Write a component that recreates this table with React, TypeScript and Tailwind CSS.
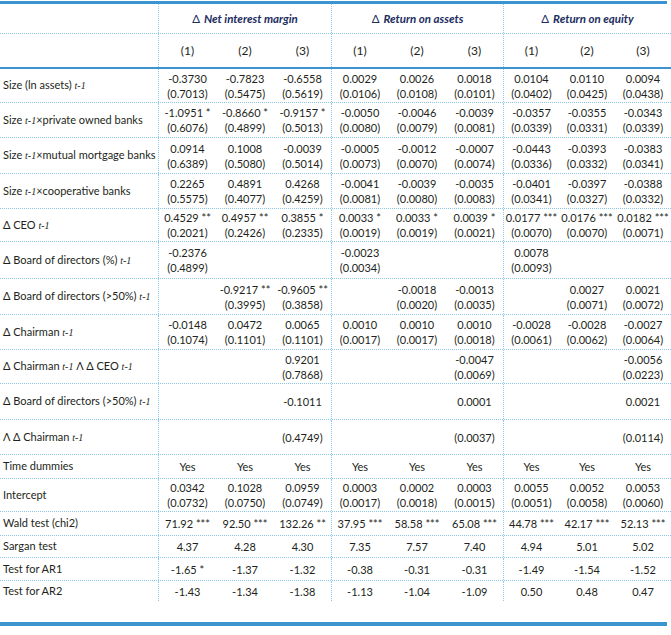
import React from "react";

type Cell = string[] | null;
type Row = { label: React.ReactNode; h: string; cells: Cell[]; last?: boolean };

const T = () => (
  <span className="italic text-[10px]" style={{ fontFamily: '"Liberation Serif", serif' }}>
    t-1
  </span>
);

const v = (s: string): string[] => s.split("|");

const rows: Row[] = [
  {
    label: <>Size (ln assets) <T /></>,
    h: "h-[34px]",
    cells: [v("-0.3730|(0.7013)"), v("-0.7823|(0.5475)"), v("-0.6558|(0.5619)"), v("0.0029|(0.0106)"), v("0.0026|(0.0108)"), v("0.0018|(0.0101)"), v("0.0104|(0.0402)"), v("0.0110|(0.0425)"), v("0.0094|(0.0438)")],
  },
  {
    label: <>Size <T />×private owned banks</>,
    h: "h-[35px]",
    cells: [v("-1.0951 *|(0.6076)"), v("-0.8660 *|(0.4899)"), v("-0.9157 *|(0.5013)"), v("-0.0050|(0.0080)"), v("-0.0046|(0.0079)"), v("-0.0039|(0.0081)"), v("-0.0357|(0.0339)"), v("-0.0355|(0.0331)"), v("-0.0343|(0.0339)")],
  },
  {
    label: <>Size <T />×mutual mortgage banks</>,
    h: "h-[36px]",
    cells: [v("0.0914|(0.6389)"), v("0.1008|(0.5080)"), v("-0.0039|(0.5014)"), v("-0.0005|(0.0073)"), v("-0.0012|(0.0070)"), v("-0.0007|(0.0074)"), v("-0.0443|(0.0336)"), v("-0.0393|(0.0332)"), v("-0.0383|(0.0341)")],
  },
  {
    label: <>Size <T />×cooperative banks</>,
    h: "h-[35px]",
    cells: [v("0.2265|(0.5575)"), v("0.4891|(0.4077)"), v("0.4268|(0.4259)"), v("-0.0041|(0.0081)"), v("-0.0039|(0.0080)"), v("-0.0035|(0.0083)"), v("-0.0401|(0.0341)"), v("-0.0397|(0.0327)"), v("-0.0388|(0.0332)")],
  },
  {
    label: <>Δ CEO <T /></>,
    h: "h-[33px]",
    cells: [v("0.4529 **|(0.2021)"), v("0.4957 **|(0.2426)"), v("0.3855 *|(0.2335)"), v("0.0033 *|(0.0019)"), v("0.0033 *|(0.0019)"), v("0.0039 *|(0.0021)"), v("0.0177 ***|(0.0070)"), v("0.0176 ***|(0.0070)"), v("0.0182 ***|(0.0071)")],
  },
  {
    label: <>Δ Board of directors (%) <T /></>,
    h: "h-[37px]",
    cells: [v("-0.2376|(0.4899)"), null, null, v("-0.0023|(0.0034)"), null, null, v("0.0078|(0.0093)"), null, null],
  },
  {
    label: <>Δ Board of directors (&gt;50%) <T /></>,
    h: "h-[36px]",
    cells: [null, v("-0.9217 **|(0.3995)"), v("-0.9605 **|(0.3858)"), null, v("-0.0018|(0.0020)"), v("-0.0013|(0.0035)"), null, v("0.0027|(0.0071)"), v("0.0021|(0.0072)")],
  },
  {
    label: <>Δ Chairman <T /></>,
    h: "h-[35px]",
    cells: [v("-0.0148|(0.1074)"), v("0.0472|(0.1101)"), v("0.0065|(0.1101)"), v("0.0010|(0.0017)"), v("0.0010|(0.0017)"), v("0.0010|(0.0018)"), v("-0.0028|(0.0061)"), v("-0.0028|(0.0062)"), v("-0.0027|(0.0064)")],
  },
  {
    label: <>Δ Chairman <T /> Λ Δ CEO <T /></>,
    h: "h-[34px]",
    cells: [null, null, v("0.9201|(0.7868)"), null, null, v("-0.0047|(0.0069)"), null, null, v("-0.0056|(0.0223)")],
  },
  {
    label: <>Δ Board of directors (&gt;50%) <T /></>,
    h: "h-[36px]",
    cells: [null, null, v("-0.1011"), null, null, v("0.0001"), null, null, v("0.0021")],
  },
  {
    label: <>Λ Δ Chairman <T /></>,
    h: "h-[35px]",
    cells: [null, null, v("(0.4749)"), null, null, v("(0.0037)"), null, null, v("(0.0114)")],
  },
  {
    label: <>Time dummies</>,
    h: "h-[24px]",
    cells: Array.from({ length: 9 }, () => v("Yes")),
  },
  {
    label: <>Intercept</>,
    h: "h-[33px]",
    cells: [v("0.0342|(0.0732)"), v("0.1028|(0.0750)"), v("0.0959|(0.0749)"), v("0.0003|(0.0017)"), v("0.0002|(0.0018)"), v("0.0003|(0.0015)"), v("0.0055|(0.0051)"), v("0.0052|(0.0058)"), v("0.0053|(0.0060)")],
  },
  {
    label: <>Wald test (chi2)</>,
    h: "h-[24px]",
    cells: [v("71.92 ***"), v("92.50 ***"), v("132.26 **"), v("37.95 ***"), v("58.58 ***"), v("65.08 ***"), v("44.78 ***"), v("42.17 ***"), v("52.13 ***")],
  },
  {
    label: <>Sargan test</>,
    h: "h-[22px]",
    cells: [v("4.37"), v("4.28"), v("4.30"), v("7.35"), v("7.57"), v("7.40"), v("4.94"), v("5.01"), v("5.02")],
  },
  {
    label: <>Test for AR1</>,
    h: "h-[23px]",
    cells: [v("-1.65 *"), v("-1.37"), v("-1.32"), v("-0.38"), v("-0.31"), v("-0.31"), v("-1.49"), v("-1.54"), v("-1.52")],
  },
  {
    label: <>Test for AR2</>,
    h: "h-[20px]",
    cells: [v("-1.43"), v("-1.34"), v("-1.38"), v("-1.13"), v("-1.04"), v("-1.09"), v("0.50"), v("0.48"), v("0.47")],
    last: true,
  },
];

const GRID = "grid grid-cols-[158px_58px_58px_57px_57px_58px_57px_56px_56px_56px]";
const DOT = "border-b border-dotted border-[#8cc8ea]";
const VL = "border-l border-dotted border-[#8cc8ea]";

function Value({ lines }: { lines: string[] }) {
  return (
    <div className="flex flex-col items-center leading-[15px]">
      {lines.map((l, i) => (
        <span key={i} className="whitespace-nowrap">
          {l}
        </span>
      ))}
    </div>
  );
}

export default function App() {
  const groups = ["Net interest margin", "Return on assets", "Return on equity"];
  return (
    <div
      className="w-[671px] h-[635px] bg-white text-[#231f20] text-[11px]"
      style={{ fontFamily: 'Lato, "Noto Sans", sans-serif' }}
    >
      <div className="pt-[1px]">
        <div className="mr-[4px] border-t-[3px] border-[#3a94d0]" />
        {/* header row 1 */}
        <div className={`grid grid-cols-[158px_173px_172px_168px] h-[30px] ${DOT}`}>
          <div />
          {groups.map((g, i) => (
            <div key={i} className={`flex items-center justify-center ${VL} text-[#1b2d5e] text-[11.5px]`}>
              <span className="mr-[4px]">Δ</span>
              <span className="font-bold italic">{g}</span>
            </div>
          ))}
        </div>
        {/* header row 2 */}
        <div className={`${GRID} h-[35px] border-b-2 border-[#3a94d0]`}>
          <div />
          {Array.from({ length: 9 }, (_, i) => (
            <div
              key={i}
              className={`flex items-center justify-center text-[12px] ${i % 3 === 0 ? VL : ""}`}
            >
              ({(i % 3) + 1})
            </div>
          ))}
        </div>
        {rows.map((r, ri) => (
          <div key={ri} className={`${GRID} ${r.h} ${r.last ? "" : DOT}`}>
            <div className="flex items-center pl-[3px]">
              <span className="whitespace-nowrap">{r.label}</span>
            </div>
            {r.cells.map((c, ci) => (
              <div key={ci} className={`flex items-center justify-center ${ci % 3 === 0 ? VL : ""}`}>
                {c && <Value lines={c} />}
              </div>
            ))}
          </div>
        ))}
        <div className="h-[21px]" />
        <div className="mr-[4px] border-t-[4px] border-[#3a94d0]" />
      </div>
    </div>
  );
}
